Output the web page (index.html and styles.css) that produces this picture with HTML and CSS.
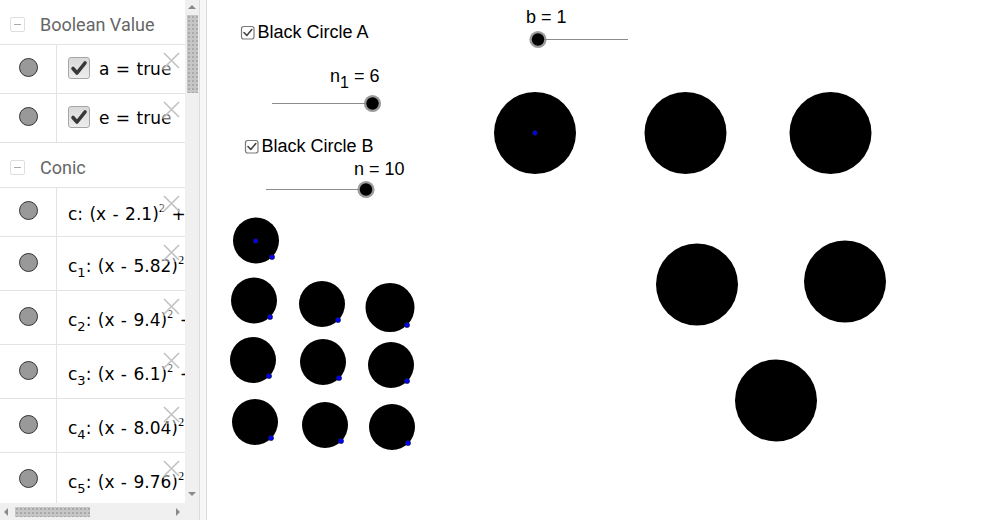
FILE: index.html
```html
<!DOCTYPE html>
<html>
<head>
<meta charset="utf-8">
<link rel="stylesheet" href="styles.css">
</head>
<body>
<div class="app">
  <aside class="sidebar">
    <div class="list">
      <div class="group-header"><span class="toggle"></span><span class="gtitle">Boolean Value</span></div>
      <div class="row">
        <div class="marker"><span class="dot"></span></div>
        <div class="content">
          <span class="cb"><svg width="22" height="22" viewBox="0 0 22 22"><path d="M5 11.5 L9 16 L17 6" class="tick"/></svg></span>
          <span class="expr">a = true</span>
        </div>
        <span class="close"><svg width="17" height="17" viewBox="0 0 17 17"><path d="M1 1 L16 16 M16 1 L1 16"/></svg></span>
      </div>
      <div class="row">
        <div class="marker"><span class="dot"></span></div>
        <div class="content">
          <span class="cb"><svg width="22" height="22" viewBox="0 0 22 22"><path d="M5 11.5 L9 16 L17 6" class="tick"/></svg></span>
          <span class="expr">e = true</span>
        </div>
        <span class="close"><svg width="17" height="17" viewBox="0 0 17 17"><path d="M1 1 L16 16 M16 1 L1 16"/></svg></span>
      </div>
      <div class="group-header"><span class="toggle"></span><span class="gtitle">Conic</span></div>
      <div class="row">
        <div class="marker"><span class="dot"></span></div>
        <div class="content conic"><span class="expr">c: (x - 2.1)<sup>2</sup> + (y - 4.3)<sup>2</sup> = 0.48</span></div>
        <span class="close"><svg width="17" height="17" viewBox="0 0 17 17"><path d="M1 1 L16 16 M16 1 L1 16"/></svg></span>
      </div>
      <div class="row tall">
        <div class="marker"><span class="dot"></span></div>
        <div class="content conic"><span class="expr">c<sub>1</sub>: (x - 5.82)<sup>2</sup> + (y - 2.4)<sup>2</sup> = 0.5</span></div>
        <span class="close"><svg width="17" height="17" viewBox="0 0 17 17"><path d="M1 1 L16 16 M16 1 L1 16"/></svg></span>
      </div>
      <div class="row tall">
        <div class="marker"><span class="dot"></span></div>
        <div class="content conic"><span class="expr">c<sub>2</sub>: (x - 9.4)<sup>2</sup> + (y - 2.4)<sup>2</sup> = 0.5</span></div>
        <span class="close"><svg width="17" height="17" viewBox="0 0 17 17"><path d="M1 1 L16 16 M16 1 L1 16"/></svg></span>
      </div>
      <div class="row tall">
        <div class="marker"><span class="dot"></span></div>
        <div class="content conic"><span class="expr">c<sub>3</sub>: (x - 6.1)<sup>2</sup> + (y - 0.5)<sup>2</sup> = 0.5</span></div>
        <span class="close"><svg width="17" height="17" viewBox="0 0 17 17"><path d="M1 1 L16 16 M16 1 L1 16"/></svg></span>
      </div>
      <div class="row tall">
        <div class="marker"><span class="dot"></span></div>
        <div class="content conic"><span class="expr">c<sub>4</sub>: (x - 8.04)<sup>2</sup> + (y - 0.6)<sup>2</sup> = 0.5</span></div>
        <span class="close"><svg width="17" height="17" viewBox="0 0 17 17"><path d="M1 1 L16 16 M16 1 L1 16"/></svg></span>
      </div>
      <div class="row tall">
        <div class="marker"><span class="dot"></span></div>
        <div class="content conic"><span class="expr">c<sub>5</sub>: (x - 9.76)<sup>2</sup> + (y - 2.4)<sup>2</sup> = 0.5</span></div>
        <span class="close"><svg width="17" height="17" viewBox="0 0 17 17"><path d="M1 1 L16 16 M16 1 L1 16"/></svg></span>
      </div>
    </div>
    <div class="vscroll"><span class="arrow-up"></span><span class="vthumb"></span><span class="arrow-down"></span></div>
    <div class="hscroll"><span class="arrow-left"></span><span class="hthumb"></span><span class="arrow-right"></span></div>
    <div class="corner"></div>
  </aside>
  <div class="splitter"></div>
  <main class="canvas">
    <svg class="board" width="801" height="520" viewBox="207 0 801 520">
      <rect class="gcb" x="241.5" y="26.5" width="12.5" height="12.5" rx="2.2"/>
      <path class="gtick" d="M244 32.5 L246.8 35.5 L251.8 29.5"/>
      <text class="lbl" x="257.5" y="38">Black Circle A</text>
      <rect class="gcb" x="245.5" y="140.5" width="12.5" height="12.5" rx="2.2"/>
      <path class="gtick" d="M248 146.5 L250.8 149.5 L255.8 143.5"/>
      <text class="lbl" x="261.5" y="152">Black Circle B</text>

      <text class="lbl" x="330" y="82">n<tspan class="sub" dy="6">1</tspan><tspan dy="-6"> = 6</tspan></text>
      <line class="track" x1="272" y1="103.5" x2="372.5" y2="103.5"/>
      <circle class="knob-ring" cx="372.5" cy="103.5" r="8.6"/>
      <circle class="knob" cx="372.5" cy="103.5" r="6.2"/>

      <text class="lbl" x="354" y="175">n = 10</text>
      <line class="track" x1="266" y1="189.5" x2="366" y2="189.5"/>
      <circle class="knob-ring" cx="366" cy="189.5" r="8.6"/>
      <circle class="knob" cx="366" cy="189.5" r="6.2"/>

      <text class="lbl" x="526" y="23">b = 1</text>
      <line class="track" x1="538" y1="39.5" x2="628" y2="39.5"/>
      <circle class="knob-ring" cx="538" cy="39.5" r="8.6"/>
      <circle class="knob" cx="538" cy="39.5" r="6.2"/>

      <circle class="disc" cx="535" cy="133" r="41"/>
      <circle class="disc" cx="685.5" cy="133" r="41"/>
      <circle class="disc" cx="830.5" cy="133" r="41"/>
      <circle class="disc" cx="697" cy="284.5" r="41"/>
      <circle class="disc" cx="845" cy="281.5" r="41"/>
      <circle class="disc" cx="776" cy="400.5" r="41"/>
      <circle class="pt" cx="535" cy="133" r="2.4"/>

      <circle class="disc" cx="256" cy="240.5" r="23"/>
      <circle class="pt" cx="255.7" cy="241" r="2.4"/>
      <circle class="pt" cx="272" cy="257" r="2.6"/>

      <circle class="disc" cx="254" cy="300.5" r="23"/>
      <circle class="pt" cx="270" cy="317" r="2.6"/>
      <circle class="disc" cx="322" cy="304" r="23"/>
      <circle class="pt" cx="338" cy="320" r="2.6"/>
      <circle class="disc" cx="390" cy="307.5" r="24.5"/>
      <circle class="pt" cx="407" cy="325" r="2.6"/>

      <circle class="disc" cx="253" cy="360" r="23"/>
      <circle class="pt" cx="269" cy="376" r="2.6"/>
      <circle class="disc" cx="323" cy="362" r="23"/>
      <circle class="pt" cx="339" cy="378" r="2.6"/>
      <circle class="disc" cx="391" cy="365" r="23"/>
      <circle class="pt" cx="407" cy="381" r="2.6"/>

      <circle class="disc" cx="255" cy="422" r="23"/>
      <circle class="pt" cx="271" cy="438" r="2.6"/>
      <circle class="disc" cx="325" cy="425" r="23"/>
      <circle class="pt" cx="341" cy="441" r="2.6"/>
      <circle class="disc" cx="392" cy="427" r="23"/>
      <circle class="pt" cx="408" cy="443" r="2.6"/>
    </svg>
  </main>
</div>
</body>
</html>
```
FILE: styles.css
```css
* { box-sizing: border-box; }
html, body { margin: 0; padding: 0; }
body {
  width: 1008px;
  height: 520px;
  overflow: hidden;
  background: #fff;
  font-family: "DejaVu Sans", sans-serif;
}
.app {
  display: flex;
  height: 520px;
}
.sidebar {
  flex: none;
  width: 200px;
  display: grid;
  grid-template-columns: 185px 14px;
  grid-template-rows: 503px 17px;
  border-right: 1px solid #dcdcdc;
}
.splitter {
  flex: none;
  width: 7px;
  background: #f7f7f7;
  border-right: 1px solid #dcdcdc;
}
.canvas {
  flex: 1;
  overflow: hidden;
}
.board { display: block; }

/* algebra list */
.list {
  overflow: hidden;
  display: flex;
  flex-direction: column;
}
.group-header {
  flex: none;
  height: 45px;
  display: flex;
  align-items: center;
  padding-top: 4px;
  border-bottom: 1px solid #e3e3e3;
}
.toggle {
  margin-left: 10px;
  width: 15px;
  height: 15px;
  border: 1px solid #dedede;
  border-radius: 2px;
  display: flex;
  align-items: center;
  justify-content: center;
}
.toggle::after {
  content: "";
  width: 7px;
  height: 1px;
  background: #aaa;
}
.gtitle {
  margin-left: 15px;
  font-family: Roboto, sans-serif;
  font-size: 18px;
  color: #666;
}
.row {
  flex: none;
  position: relative;
  height: 49px;
  display: flex;
  border-bottom: 1px solid #e3e3e3;
}
.row.tall { height: 54px; }
.marker {
  flex: none;
  width: 57px;
  border-right: 1px solid #e3e3e3;
  display: flex;
  align-items: center;
  justify-content: center;
}
.dot {
  width: 19px;
  height: 19px;
  border-radius: 50%;
  background: #999;
  border: 1px solid #333;
  margin-bottom: 3px;
}
.content {
  flex: 1;
  min-width: 0;
  display: flex;
  align-items: center;
  padding-left: 11px;
  white-space: nowrap;
  overflow: hidden;
  font-size: 17px;
  color: #000;
}
.content.conic { padding-top: 4px; }
.cb {
  flex: none;
  width: 22px;
  height: 22px;
  margin-right: 9px;
  margin-bottom: 2px;
  border: 1px solid #a6a6a6;
  border-radius: 3px;
  background: linear-gradient(#d9d9d9, #ededed);
  display: flex;
  align-items: center;
  justify-content: center;
}
.cb svg { display: block; margin: -1px; }
.tick {
  fill: none;
  stroke: #383838;
  stroke-width: 3.6;
  stroke-linecap: round;
  stroke-linejoin: round;
}
.expr { word-spacing: 1px; }
.expr sup { font-size: 10px; vertical-align: 8px; line-height: 0; }
.expr sub { font-size: 13px; vertical-align: -5px; line-height: 0; }
.close {
  position: absolute;
  left: 161px;
  top: 5px;
  width: 21px;
  height: 20px;
  display: flex;
  align-items: center;
  justify-content: center;
  background: rgba(255, 255, 255, 0.45);
}
.close svg { display: block; }
.close path { stroke: #c2c2c2; stroke-width: 1.6; fill: none; }

/* scrollbars */
.vscroll {
  background: #f0f0f0;
  display: flex;
  flex-direction: column;
  align-items: center;
}
.arrow-up {
  margin-top: 5px;
  width: 0; height: 0;
  border-left: 4px solid transparent;
  border-right: 4px solid transparent;
  border-bottom: 4px solid #8a8a8a;
}
.vthumb {
  margin-top: 6px;
  width: 11px;
  height: 78px;
  background-color: #c6c6c6;
  background-image: radial-gradient(circle, #a8a8a8 0.7px, transparent 0.9px);
  background-size: 4px 4px;
}
.arrow-down {
  margin-top: auto;
  margin-bottom: 7px;
  width: 0; height: 0;
  border-left: 4px solid transparent;
  border-right: 4px solid transparent;
  border-top: 4px solid #8a8a8a;
}
.hscroll {
  background: #f0f0f0;
  display: flex;
  align-items: center;
}
.arrow-left {
  margin-left: 4px;
  width: 0; height: 0;
  border-top: 4px solid transparent;
  border-bottom: 4px solid transparent;
  border-right: 4px solid #8a8a8a;
}
.hthumb {
  margin-left: 7px;
  width: 75px;
  height: 10px;
  background-color: #c6c6c6;
  background-image: radial-gradient(circle, #a8a8a8 0.7px, transparent 0.9px);
  background-size: 4px 4px;
}
.arrow-right {
  margin-left: auto;
  margin-right: 5px;
  width: 0; height: 0;
  border-top: 4px solid transparent;
  border-bottom: 4px solid transparent;
  border-left: 4px solid #8a8a8a;
}
.corner { background: #f0f0f0; }

/* graphics view */
.lbl {
  font-family: "Liberation Sans", Arial, sans-serif;
  font-size: 18px;
  fill: #000;
}
.lbl .sub { font-size: 16px; }
.gcb { fill: #fff; stroke: #7a7a7a; stroke-width: 1.2; }
.gtick { fill: none; stroke: #444; stroke-width: 1.6; stroke-linecap: round; stroke-linejoin: round; }
.track { stroke: #8c8c8c; stroke-width: 1; }
.knob-ring { fill: #8a8a8a; opacity: 0.85; }
.knob { fill: #000; }
.disc { fill: #000; }
.pt { fill: #0000ff; stroke: #1a1a1a; stroke-width: 0.6; }
```
